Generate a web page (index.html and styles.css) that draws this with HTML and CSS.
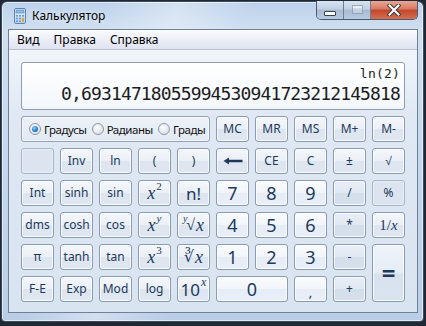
FILE: index.html
```html
<!DOCTYPE html>
<html lang="ru">
<head>
    <meta charset="UTF-8">
    <title>Калькулятор</title>
    <link rel="stylesheet" href="styles.css">
</head>
<body>
    <div class="window">
        <!-- Title bar -->
        <div class="titlebar">
            <svg class="app-icon" width="16" height="16" viewBox="0 0 16 16">
                <defs>
                    <linearGradient id="calcBody" x1="0" y1="0" x2="0" y2="1">
                        <stop offset="0" stop-color="#eaf3fc"/>
                        <stop offset="1" stop-color="#b9d3ee"/>
                    </linearGradient>
                </defs>
                <rect x="2.5" y="0.5" width="11" height="15" rx="1.5" fill="url(#calcBody)" stroke="#5a86b6"/>
                <rect x="4" y="2" width="8" height="3" fill="#8fbde8" stroke="#4f7fb3" stroke-width="0.6"/>
                <g fill="#6f9bc9">
                    <rect x="4" y="7" width="2" height="1.6"/>
                    <rect x="7" y="7" width="2" height="1.6"/>
                    <rect x="10" y="7" width="2" height="1.6"/>
                    <rect x="4" y="9.7" width="2" height="1.6"/>
                    <rect x="7" y="9.7" width="2" height="1.6"/>
                    <rect x="4" y="12.4" width="2" height="1.6"/>
                    <rect x="7" y="12.4" width="2" height="1.6"/>
                </g>
                <rect x="10" y="9.7" width="2" height="4.3" fill="#e8a23a"/>
            </svg>
            <span class="title">Калькулятор</span>
            <div class="caption-buttons">
                <div class="cap cap-min"><span class="min-glyph"></span></div>
                <div class="cap cap-max"><span class="max-glyph"></span></div>
                <div class="cap cap-close">
                    <svg width="14" height="12" viewBox="0 0 14 12">
                        <path d="M2.5 1.5 L11.5 10.5 M11.5 1.5 L2.5 10.5" stroke="#3b3b3b" stroke-width="4" stroke-linecap="square"/>
                        <path d="M2.5 1.5 L11.5 10.5 M11.5 1.5 L2.5 10.5" stroke="#ffffff" stroke-width="2" stroke-linecap="square"/>
                    </svg>
                </div>
            </div>
        </div>

        <div class="client">
            <!-- Menu -->
            <div class="menubar">
                <span class="menu-item">Вид</span>
                <span class="menu-item">Правка</span>
                <span class="menu-item">Справка</span>
            </div>

            <div class="calc">
                <!-- Display -->
                <div class="display">
                    <div class="expr">ln(2)</div>
                    <div class="value">0,69314718055994530941723212145818</div>
                </div>

                <!-- Angle units and memory -->
                <div class="top-row">
                    <div class="angle-group">
                        <span class="radio checked"><span class="dot"></span></span>
                        <span class="radio-label">Градусы</span>
                        <span class="radio"></span>
                        <span class="radio-label">Радианы</span>
                        <span class="radio"></span>
                        <span class="radio-label">Грады</span>
                    </div>
                    <button class="key">MC</button>
                    <button class="key">MR</button>
                    <button class="key">MS</button>
                    <button class="key">M+</button>
                    <button class="key">M-</button>
                </div>

                <!-- Keypad -->
                <div class="keypad">
                    <button class="key disabled"></button>
                    <button class="key">Inv</button>
                    <button class="key">ln</button>
                    <button class="key">(</button>
                    <button class="key">)</button>
                    <button class="key">
                        <svg width="20" height="8" viewBox="0 0 20 8"><path d="M0.5 4 L6 0.5 L6 2.8 L19.5 2.8 L19.5 5.2 L6 5.2 L6 7.5 Z" fill="#1e395b"/></svg>
                    </button>
                    <button class="key">CE</button>
                    <button class="key">C</button>
                    <button class="key">±</button>
                    <button class="key">√</button>

                    <button class="key">Int</button>
                    <button class="key">sinh</button>
                    <button class="key">sin</button>
                    <button class="key math"><i>x</i><sup>2</sup></button>
                    <button class="key big">n!</button>
                    <button class="key num">7</button>
                    <button class="key num">8</button>
                    <button class="key num">9</button>
                    <button class="key op">/</button>
                    <button class="key disabled">%</button>

                    <button class="key">dms</button>
                    <button class="key">cosh</button>
                    <button class="key">cos</button>
                    <button class="key math"><i>x</i><sup><i>y</i></sup></button>
                    <button class="key math"><sup class="index"><i>y</i></sup><span class="root">√</span><i>x</i></button>
                    <button class="key num">4</button>
                    <button class="key num">5</button>
                    <button class="key num">6</button>
                    <button class="key op">*</button>
                    <button class="key math small">1/<i>x</i></button>

                    <button class="key">π</button>
                    <button class="key">tanh</button>
                    <button class="key">tan</button>
                    <button class="key math"><i>x</i><sup>3</sup></button>
                    <button class="key math"><span class="root">∛</span><i>x</i></button>
                    <button class="key num">1</button>
                    <button class="key num">2</button>
                    <button class="key num">3</button>
                    <button class="key op">-</button>
                    <button class="key op equals">=</button>

                    <button class="key">F-E</button>
                    <button class="key">Exp</button>
                    <button class="key">Mod</button>
                    <button class="key">log</button>
                    <button class="key big">10<sup><i>x</i></sup></button>
                    <button class="key num zero">0</button>
                    <button class="key num comma">,</button>
                    <button class="key op">+</button>
                </div>
            </div>
        </div>
    </div>
</body>
</html>
```

FILE: styles.css
```css
* {
    box-sizing: border-box;
    margin: 0;
    padding: 0;
}
body {
    width: 426px;
    height: 326px;
    overflow: hidden;
    background: #1f2834;
    font-family: 'Noto Sans', 'Segoe UI', sans-serif;
    font-size: 12px;
    color: #000;
}

/* Window frame */
.window {
    width: 423px;
    height: 321px;
    margin: 1px 0 0 1px;
    padding: 0 5px 8px 6px;
    border: 1px solid #3d4a5b;
    border-radius: 6px 6px 4px 4px;
    background:
        linear-gradient(105deg, rgba(255, 255, 255, 0) 20%, rgba(255, 255, 255, 0.35) 35%, rgba(255, 255, 255, 0) 50%),
        linear-gradient(to bottom, #bcd2eb, #cfdff1 28px, #c2d5ec 60%, #b9cde6);
    box-shadow: inset 0 0 0 1px rgba(255, 255, 255, 0.55);
    display: flex;
    flex-direction: column;
}

/* Title bar */
.titlebar {
    height: 27px;
    display: flex;
    align-items: center;
    position: relative;
}
.app-icon {
    margin-left: 4px;
    flex-shrink: 0;
}
.title {
    margin-left: 4px;
    font-size: 12px;
    color: #000;
    text-shadow: 0 0 6px rgba(255, 255, 255, 0.9);
}
.caption-buttons {
    position: absolute;
    top: -1px;
    right: 0;
    height: 19px;
    display: flex;
    border: 1px solid #4b5a70;
    border-top: none;
    border-radius: 0 0 5px 5px;
    overflow: hidden;
}
.cap {
    display: flex;
    align-items: center;
    justify-content: center;
}
.cap-min,
.cap-max {
    width: 27px;
    background: linear-gradient(to bottom, #d7e3f0, #c1d0e2 45%, #a9bbd2 50%, #b8cae0);
    border-right: 1px solid #6d7d93;
}
.cap-close {
    width: 46px;
    background: linear-gradient(to bottom, #eaa796, #d77a62 45%, #c4452b 50%, #d4704f);
}
.min-glyph {
    width: 12px;
    height: 5px;
    margin-top: 6px;
    background: #fff;
    border: 1px solid #37414f;
    border-radius: 1px;
}
.max-glyph {
    width: 11px;
    height: 9px;
    margin-top: -2px;
    border: 1px solid rgba(90, 105, 125, 0.45);
    box-shadow: inset 0 2px 0 rgba(255, 255, 255, 0.5);
    background: rgba(230, 238, 247, 0.4);
}

/* Client area */
.client {
    flex: 1;
    border: 1px solid #6f8097;
    background: #dde7f3;
    display: flex;
    flex-direction: column;
}
.menubar {
    height: 20px;
    padding-left: 1px;
    display: flex;
    align-items: center;
    background: linear-gradient(to bottom, #fbfcfe, #e9ecf6 60%, #dfe3f1);
    border-bottom: 1px solid #b9c1cf;
}
.menu-item {
    padding: 0 7px;
    font-size: 12px;
    line-height: 19px;
}

/* Calculator body */
.calc {
    flex: 1;
    padding: 12px 12px 10px;
    background: linear-gradient(to bottom, #f1f5fb, #dfe8f3 25%, #d9e4f1);
}
.display {
    height: 48px;
    margin-bottom: 6px;
    padding: 3px 4px 0;
    border: 1px solid #8e9db2;
    border-radius: 3px;
    background: linear-gradient(to bottom, #ffffff, #f3f7fc);
    text-align: right;
    font-family: 'DejaVu Sans Mono', monospace;
    color: #1c1c1c;
}
.expr {
    font-size: 13px;
    line-height: 16px;
    letter-spacing: 0.2px;
}
.value {
    font-size: 18px;
    line-height: 24px;
    letter-spacing: -0.87px;
}

.top-row {
    display: flex;
    gap: 6px;
    height: 26px;
    margin-bottom: 6px;
}
.angle-group {
    width: 189px;
    flex-shrink: 0;
    display: flex;
    align-items: center;
    padding-left: 7px;
    border: 1px solid #93a2b7;
    border-radius: 3px;
    background: linear-gradient(to bottom, #edf2f9, #e1e9f3);
    box-shadow: inset 0 0 0 1px rgba(255, 255, 255, 0.6);
    overflow: hidden;
}
.radio {
    width: 12px;
    height: 12px;
    flex-shrink: 0;
    border: 1px solid #8b98a9;
    border-radius: 50%;
    background: radial-gradient(circle at 40% 35%, #fdfdfd, #dfe3e8 70%, #cbd2da);
    display: flex;
    align-items: center;
    justify-content: center;
}
.radio .dot {
    width: 6px;
    height: 6px;
    border-radius: 50%;
    background: radial-gradient(circle at 40% 35%, #8fd6ff, #1f73c4 60%, #0c3f86);
}
.radio-label {
    margin: 0 5px 0 3px;
    font-size: 11.5px;
    letter-spacing: -0.45px;
    white-space: nowrap;
    color: #111;
}

/* Keys */
.keypad {
    display: grid;
    grid-template-columns: repeat(10, 33px);
    grid-template-rows: repeat(5, 26px);
    gap: 6px;
}
.key {
    width: 33px;
    height: 26px;
    flex-shrink: 0;
    display: flex;
    align-items: center;
    justify-content: center;
    border: 1px solid #8a9bb3;
    border-radius: 3px;
    background: linear-gradient(to bottom, #f4f7fb, #ebf0f7 48%, #dde6f0 52%, #dfe7f1);
    box-shadow: inset 0 0 0 1px rgba(255, 255, 255, 0.75);
    font-family: 'Noto Sans', 'Segoe UI', sans-serif;
    font-size: 12px;
    color: #1e395b;
    line-height: 1;
}
.key.num {
    font-size: 18px;
    background: linear-gradient(to bottom, #fafbfd, #f1f5fa 48%, #e6edf6 52%, #e9eff7);
}
.key.comma {
    font-size: 13px;
    padding-top: 6px;
}
.key.op {
    background: linear-gradient(to bottom, #e9eff7, #e0e8f2 48%, #d3deeb 52%, #d7e1ed);
}
.key.disabled {
    border-color: #a9b7c9;
    background: #dbe4ef;
    box-shadow: inset 0 0 0 1px rgba(255, 255, 255, 0.35);
}
.key.big {
    font-size: 17px;
}
.key.math {
    font-family: 'Liberation Serif', 'DejaVu Serif', serif;
    font-size: 18px;
}
.key.math.small {
    font-size: 15px;
}
.key sup {
    font-size: 11px;
    line-height: 0;
    position: relative;
    top: -7px;
    vertical-align: baseline;
    margin-left: 1px;
}
.key sup.index {
    font-size: 10px;
    top: -6px;
    margin: 0 -1px 0 0;
}
.key .root {
    font-size: 16px;
    margin-right: 1px;
}
.key.big sup {
    font-family: 'Liberation Serif', serif;
    font-size: 12px;
}
.key.equals {
    grid-row: 4 / span 2;
    grid-column: 10;
    height: 58px;
    font-size: 24px;
    font-weight: 700;
    background: linear-gradient(to bottom, #eef3f9, #e6edf5 48%, #d8e2ee 52%, #dae4ef);
}
.key.zero {
    grid-column: 6 / span 2;
    width: 72px;
}
```
